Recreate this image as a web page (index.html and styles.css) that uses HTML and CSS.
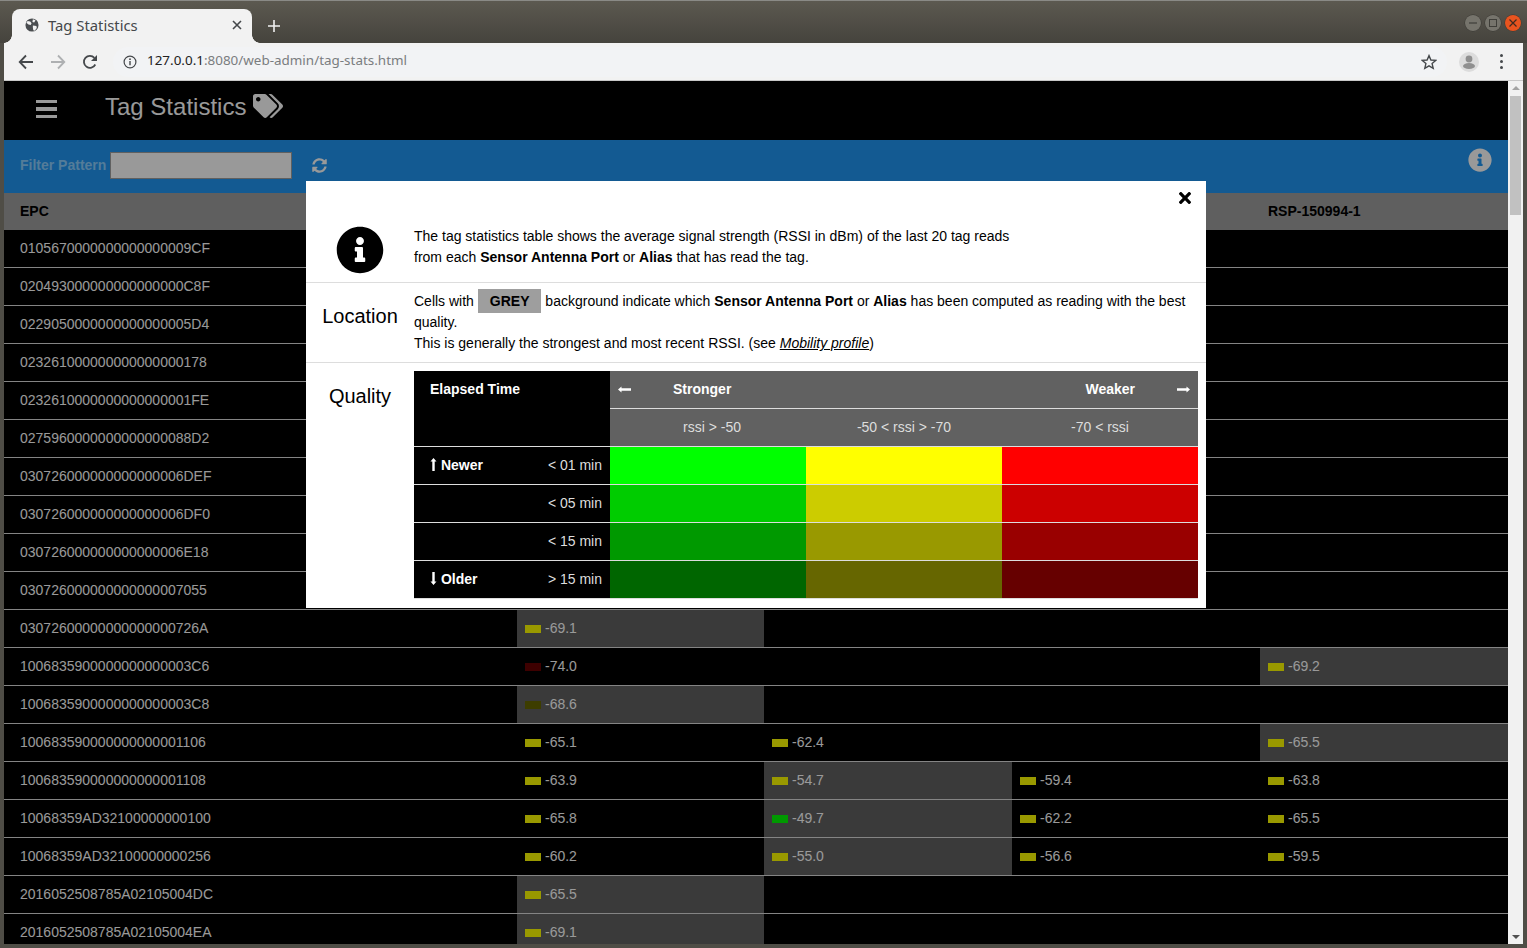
FILE: index.html
```html
<!DOCTYPE html>
<html lang="en">
<head>
<meta charset="UTF-8" />
<title>Tag Statistics</title>
<link rel="stylesheet" href="styles.css">
</head>
<body>

<div class="titlebar">
  <div class="tab">
    <svg class="tab-globe" viewBox="0 0 16 16"><circle cx="8" cy="8" r="7.5" fill="#4a4d50"/><path d="M3 3.5l3 .5 1.5 2-1 2-2.500-.5L1.500 5.500zM9 1.500l3 1-1.500 2.500-2-.5zM9 8.500l4 .5.500 2.500-2.500 3-1.500-.5-.5-3z" fill="#f2f2f2"/></svg>
    <span class="tab-title">Tag Statistics</span>
    <svg class="tab-close" viewBox="0 0 10 10"><path d="M1 1l8 8M9 1l-8 8" stroke="#45484b" stroke-width="1.600"/></svg>
  </div>
  <svg class="new-tab" viewBox="0 0 12 12"><path d="M6 0v12M0 6h12" stroke="#f1f1f1" stroke-width="1.600"/></svg>
  <div class="win-buttons">
    <span class="win-btn"><svg viewBox="0 0 16 16"><path d="M4 8h8" stroke="#3f3e39" stroke-width="1.200"/></svg></span>
    <span class="win-btn"><svg viewBox="0 0 16 16"><rect x="4.500" y="4.500" width="7" height="7" fill="none" stroke="#3f3e39"/></svg></span>
    <span class="win-btn win-close"><svg viewBox="0 0 16 16"><path d="M4.500 4.500l7 7M11.500 4.500l-7 7" stroke="#3f2a20" stroke-width="1.200"/></svg></span>
  </div>
</div>

<div class="toolbar">
  <svg class="nav-icon" viewBox="0 0 16 16"><path d="M15 8H2M8 1.500L1.700 8 8 14.500" fill="none" stroke="#45484b" stroke-width="1.800"/></svg>
  <svg class="nav-icon" viewBox="0 0 16 16"><path d="M1 8h13M8 1.500L14.300 8 8 14.500" fill="none" stroke="#aeb0b2" stroke-width="1.800"/></svg>
  <svg class="nav-icon" viewBox="0 0 16 16"><path d="M13.300 10.500A6 6 0 1 1 12.400 3.800" fill="none" stroke="#45484b" stroke-width="1.800"/><path d="M15 1v6H9z" fill="#45484b"/></svg>
  <div class="omnibox">
    <svg class="omni-info" viewBox="0 0 14 14"><circle cx="7" cy="7" r="5.900" fill="none" stroke="#45484b" stroke-width="1.200"/><path d="M7 6v4.300" stroke="#45484b" stroke-width="1.400"/><circle cx="7" cy="4.200" r=".9" fill="#45484b"/></svg>
    <span class="url"><span class="url-host">127.0.0.1</span>:8080/web-admin/tag-stats.html</span>
    <svg class="star" viewBox="0 0 16 16"><path d="M8 1.600l1.900 4.400 4.800.4-3.600 3.200 1.100 4.700L8 11.800l-4.200 2.500 1.100-4.700-3.600-3.200 4.800-.4z" fill="none" stroke="#45484b" stroke-width="1.400"/></svg>
  </div>
  <svg class="avatar" viewBox="0 0 20 20"><circle cx="10" cy="10" r="10" fill="#dcdcdc"/><circle cx="10" cy="7" r="3.400" fill="#8f8f8f"/><ellipse cx="10" cy="14" rx="6" ry="3" fill="#8f8f8f"/></svg>
  <div class="menu-dots"><i></i><i></i><i></i></div>
</div>

<div class="window">
  <div class="page">
    <div class="page-head">
      <div class="hamburger"><i></i><i></i><i></i></div>
      <h1>Tag Statistics</h1>
      <svg class="tags-icon" viewBox="0 0 640 512"><path d="M497.941 225.941L286.059 14.059A48 48 0 0 0 252.118 0H48C21.49 0 0 21.49 0 48v204.118a48 48 0 0 0 14.059 33.941l211.882 211.882c18.744 18.745 49.136 18.746 67.882 0l204.118-204.118c18.745-18.745 18.745-49.137 0-67.882zM112 160c-26.51 0-48-21.49-48-48s21.49-48 48-48 48 21.49 48 48-21.49 48-48 48zm513.941 133.823L421.823 497.941c-18.745 18.745-49.137 18.745-67.882 0l-.36-.36L527.64 323.522c16.999-16.999 26.36-39.6 26.36-63.64s-9.362-46.641-26.36-63.64L331.397 0h48.721a48 48 0 0 1 33.941 14.059l211.882 211.882c18.745 18.745 18.745 49.137 0 67.882z"/></svg>
    </div>

    <div class="filter-bar">
      <label for="filter">Filter Pattern</label>
      <input type="text" id="filter" />
      <svg class="sync-icon" viewBox="0 0 512 512"><path d="M370.72 133.28C339.458 104.008 298.888 87.962 255.848 88c-77.458.068-144.328 53.178-162.791 126.85-1.344 5.363-6.122 9.15-11.651 9.15H24.103c-7.498 0-13.194-6.807-11.807-14.176C33.933 94.924 134.813 8 256 8c66.448 0 126.791 26.136 171.315 68.685L463.03 40.97C478.149 25.851 504 36.559 504 57.941V192c0 13.255-10.745 24-24 24H345.941c-21.382 0-32.09-25.851-16.971-40.971l41.75-41.749zM32 296h134.059c21.382 0 32.09 25.851 16.971 40.971l-41.75 41.75c31.262 29.273 71.835 45.319 114.876 45.28 77.418-.07 144.315-53.144 162.787-126.849 1.344-5.363 6.122-9.15 11.651-9.15h57.304c7.498 0 13.194 6.807 11.807 14.176C478.067 417.076 377.187 504 256 504c-66.448 0-126.791-26.136-171.315-68.685L48.97 471.03C33.851 486.149 8 475.441 8 454.059V320c0-13.255 10.745-24 24-24z"/></svg>
      <svg class="help-icon" viewBox="0 0 512 512"><path d="M256 8C119.043 8 8 119.083 8 256c0 136.997 111.043 248 248 248s248-111.003 248-248C504 119.083 392.957 8 256 8zm0 110c23.196 0 42 18.804 42 42s-18.804 42-42 42-42-18.804-42-42 18.804-42 42-42zm56 254c0 6.627-5.373 12-12 12h-88c-6.627 0-12-5.373-12-12v-24c0-6.627 5.373-12 12-12h12v-64h-12c-6.627 0-12-5.373-12-12v-24c0-6.627 5.373-12 12-12h64c6.627 0 12 5.373 12 12v100h12c6.627 0 12 5.373 12 12v24z"/></svg>
    </div>

    <table class="stats">
      <colgroup><col class="col-epc"><col class="col-a"><col class="col-b"><col class="col-b"><col class="col-b"></colgroup>
      <thead><tr><th>EPC</th><th></th><th></th><th></th><th>RSP-150994-1</th></tr></thead>
      <tbody>
        <tr><td>0105670000000000000009CF</td><td></td><td></td><td></td><td></td></tr>
        <tr><td>020493000000000000000C8F</td><td></td><td></td><td></td><td></td></tr>
        <tr><td>0229050000000000000005D4</td><td></td><td></td><td></td><td></td></tr>
        <tr><td>023261000000000000000178</td><td></td><td></td><td></td><td></td></tr>
        <tr><td>0232610000000000000001FE</td><td></td><td></td><td></td><td></td></tr>
        <tr><td>0275960000000000000088D2</td><td></td><td></td><td></td><td></td></tr>
        <tr><td>030726000000000000006DEF</td><td></td><td></td><td></td><td></td></tr>
        <tr><td>030726000000000000006DF0</td><td></td><td></td><td></td><td></td></tr>
        <tr><td>030726000000000000006E18</td><td></td><td></td><td></td><td></td></tr>
        <tr><td>030726000000000000007055</td><td></td><td></td><td></td><td></td></tr>
        <tr><td>03072600000000000000726A</td><td class="best"><i class="bar y1"></i>-69.1</td><td></td><td></td><td></td></tr>
        <tr><td>1006835900000000000003C6</td><td><i class="bar r4"></i>-74.0</td><td></td><td></td><td class="best"><i class="bar y1"></i>-69.2</td></tr>
        <tr><td>1006835900000000000003C8</td><td class="best"><i class="bar y4"></i>-68.6</td><td></td><td></td><td></td></tr>
        <tr><td>100683590000000000001106</td><td><i class="bar y1"></i>-65.1</td><td><i class="bar y1"></i>-62.4</td><td></td><td class="best"><i class="bar y1"></i>-65.5</td></tr>
        <tr><td>100683590000000000001108</td><td><i class="bar y1"></i>-63.9</td><td class="best"><i class="bar y1"></i>-54.7</td><td><i class="bar y1"></i>-59.4</td><td><i class="bar y1"></i>-63.8</td></tr>
        <tr><td>10068359AD32100000000100</td><td><i class="bar y1"></i>-65.8</td><td class="best"><i class="bar g1"></i>-49.7</td><td><i class="bar y1"></i>-62.2</td><td><i class="bar y1"></i>-65.5</td></tr>
        <tr><td>10068359AD32100000000256</td><td><i class="bar y1"></i>-60.2</td><td class="best"><i class="bar y1"></i>-55.0</td><td><i class="bar y1"></i>-56.6</td><td><i class="bar y1"></i>-59.5</td></tr>
        <tr><td>2016052508785A02105004DC</td><td class="best"><i class="bar y1"></i>-65.5</td><td></td><td></td><td></td></tr>
        <tr><td>2016052508785A02105004EA</td><td class="best"><i class="bar y1"></i>-69.1</td><td></td><td></td><td></td></tr>
      </tbody>
    </table>

    <div class="modal">
      <div class="modal-box">
        <div class="modal-top">
          <svg class="close-icon" viewBox="0 80 352 352"><path d="M242.72 256l100.07-100.07c12.28-12.28 12.28-32.19 0-44.48l-22.24-22.24c-12.28-12.28-32.19-12.28-44.48 0L176 189.28 75.93 89.21c-12.28-12.28-32.19-12.28-44.48 0L9.21 111.45c-12.28 12.28-12.28 32.19 0 44.48L109.28 256 9.21 356.07c-12.28 12.28-12.28 32.19 0 44.48l22.24 22.24c12.28 12.28 32.2 12.28 44.48 0L176 322.72l100.07 100.07c12.28 12.28 32.2 12.28 44.48 0l22.24-22.24c12.28-12.28 12.28-32.19 0-44.48L242.72 256z"/></svg>
        </div>
        <div class="help-row help-intro">
          <div class="help-label"><svg class="big-info" viewBox="0 0 512 512"><path d="M256 8C119.043 8 8 119.083 8 256c0 136.997 111.043 248 248 248s248-111.003 248-248C504 119.083 392.957 8 256 8zm0 110c23.196 0 42 18.804 42 42s-18.804 42-42 42-42-18.804-42-42 18.804-42 42-42zm56 254c0 6.627-5.373 12-12 12h-88c-6.627 0-12-5.373-12-12v-24c0-6.627 5.373-12 12-12h12v-64h-12c-6.627 0-12-5.373-12-12v-24c0-6.627 5.373-12 12-12h64c6.627 0 12 5.373 12 12v100h12c6.627 0 12 5.373 12 12v24z"/></svg></div>
          <div class="help-text">The tag statistics table shows the average signal strength (RSSI in dBm) of the last 20 tag reads<br>from each <b>Sensor Antenna Port</b> or <b>Alias</b> that has read the tag.</div>
        </div>
        <div class="help-row help-location">
          <div class="help-label">Location</div>
          <div class="help-text">Cells with <span class="grey-tag">GREY</span> background indicate which <b>Sensor Antenna Port</b> or <b>Alias</b> has been computed as reading with the best quality.<br>This is generally the strongest and most recent RSSI. (see <a href="#"><i>Mobility profile</i></a>)</div>
        </div>
        <div class="help-row help-quality">
          <div class="help-label">Quality</div>
          <table class="legend">
            <tr>
              <th class="corner" rowspan="2">Elapsed Time</th>
              <th class="dir" colspan="3">
                <div class="dir-row">
                  <svg class="arrow-h" viewBox="0 0 13 7"><path d="M13 2.300H3.500V.5L0 3.500l3.500 3V4.700H13z"/></svg>
                  <span class="dir-left">Stronger</span>
                  <span class="dir-right">Weaker</span>
                  <svg class="arrow-h" viewBox="0 0 13 7"><path d="M0 2.300h9.500V.5L13 3.500l-3.500 3V4.700H0z"/></svg>
                </div>
              </th>
            </tr>
            <tr><td class="range range-first">rssi &gt; -50</td><td class="range">-50 &lt; rssi &gt; -70</td><td class="range">-70 &lt; rssi</td></tr>
            <tr>
              <th class="age"><div class="age-row"><b><svg class="arrow-v" viewBox="0 0 7 13"><path d="M2.300 13V3.500H.5L3.500 0l3 3.500H4.700V13z"/></svg> Newer</b><span>&lt; 01 min</span></div></th>
              <td class="c-g1"></td><td class="c-y1"></td><td class="c-r1"></td>
            </tr>
            <tr>
              <th class="age"><div class="age-row"><b></b><span>&lt; 05 min</span></div></th>
              <td class="c-g2"></td><td class="c-y2"></td><td class="c-r2"></td>
            </tr>
            <tr>
              <th class="age"><div class="age-row"><b></b><span>&lt; 15 min</span></div></th>
              <td class="c-g3"></td><td class="c-y3"></td><td class="c-r3"></td>
            </tr>
            <tr>
              <th class="age"><div class="age-row"><b><svg class="arrow-v" viewBox="0 0 7 13"><path d="M2.300 0v9.500H.5L3.500 13l3-3.500H4.700V0z"/></svg> Older</b><span>&gt; 15 min</span></div></th>
              <td class="c-g4"></td><td class="c-y4"></td><td class="c-r4"></td>
            </tr>
          </table>
        </div>
      </div>
    </div>
  </div>

  <div class="scrollbar">
    <span class="sb-up"></span>
    <div class="sb-track"><div class="sb-thumb"></div></div>
    <span class="sb-down"></span>
  </div>
</div>

</body>
</html>
```

FILE: styles.css
```css
html, body { height: 100%; }
body { margin: 0; height: 948px; overflow: hidden; background: #4f4d46; display: flex; flex-direction: column; font-family: "Liberation Sans", Arial, sans-serif; font-size: 14px; color: #000; }

/* browser chrome */
.titlebar { height: 43px; flex: none; display: flex; align-items: flex-end; padding-left: 12px; background: linear-gradient(#5c5950, #45433d); border-top: 1px solid #8a8a86; box-sizing: border-box; }
.tab { position: relative; width: 240px; height: 34px; box-sizing: border-box; display: flex; align-items: center; padding: 0 10px 2px 13px; background: #f2f2f2; border-radius: 8px 8px 0 0; }
.tab::before, .tab::after { content: ""; position: absolute; bottom: 0; width: 8px; height: 8px; }
.tab::before { left: -8px; background: radial-gradient(circle at 0 0, transparent 7.5px, #f2f2f2 8px); }
.tab::after { right: -8px; background: radial-gradient(circle at 100% 0, transparent 7.5px, #f2f2f2 8px); }
.tab-globe { width: 14px; height: 14px; }
.tab-title { margin-left: 9px; flex: 1; font-family: "Noto Sans", sans-serif; font-size: 14.800px; color: #45484b; }
.tab-close { width: 10px; height: 10px; }
.new-tab { width: 12px; height: 12px; margin: 0 0 11px 16px; }
.win-buttons { margin-left: auto; margin-right: 6px; margin-bottom: 12px; display: flex; gap: 4px; }
.win-btn { width: 16px; height: 16px; border-radius: 50%; background: #76746c; box-shadow: 0 0 0 .5px #3a3934; display: block; }
.win-btn svg { display: block; }
.win-close { background: #e9541f; }

.toolbar { height: 38px; flex: none; margin: 0 4px; box-sizing: border-box; padding: 0 0 0 14px; display: flex; align-items: center; background: #f2f2f2; border-bottom: 1px solid #c8c8c8; }
.nav-icon { width: 16px; height: 16px; margin-right: 16px; }
.omnibox { width: 1334px; height: 30px; margin-left: -1px; display: flex; align-items: center; background: #f2f3f5; border-radius: 15px; padding-left: 10px; box-sizing: border-box; }
.omni-info { width: 14px; height: 14px; }
.url { margin: 0 0 4px 10px; flex: 1; font-family: "Noto Sans", sans-serif; font-size: 13.450px; color: #7a7d80; }
.url-host { color: #222; }
.star { width: 16px; height: 16px; margin-right: 10px; }
.avatar { width: 20px; height: 20px; margin-left: 12px; }
.menu-dots { margin-left: 21px; display: flex; flex-direction: column; gap: 3px; }
.menu-dots i { display: block; width: 3px; height: 3px; background: #45484b; border-radius: 50%; }

.window { flex: none; height: 863px; margin: 0 4px; display: flex; background: #000; }

/* page */
.page { position: relative; width: 1504px; height: 863px; overflow: hidden; background: #000; color: #fff; }
.page-head { height: 59px; padding-bottom: 8px; box-sizing: border-box; display: flex; align-items: center; }
.hamburger { margin-left: 32px; width: 21px; display: flex; flex-direction: column; gap: 4px; margin-top: 5px; }
.hamburger i { display: block; height: 3.500px; background: #fff; }
.page-head h1 { margin: 0 0 0 48px; font-size: 24px; font-weight: normal; }
.tags-icon { width: 30px; height: 24px; margin: -2px 0 0 7px; fill: #fff; }

.filter-bar { position: relative; height: 53px; display: flex; align-items: center; padding-left: 16px; background: #2196f3; }
.filter-bar label { font-weight: bold; color: #8ccfff; margin-bottom: 3px; }
.filter-bar input { width: 182px; height: 27px; box-sizing: border-box; margin: 0 0 2px 4px; padding: 0; background: #fff; border: 1px solid #a0a0a0; }
.sync-icon { width: 15px; height: 15px; margin: 0 0 2px 20px; fill: #fff; }
.help-icon { position: absolute; right: 16px; top: 8px; width: 24px; height: 24px; fill: #fff; }

.stats { width: 1504px; table-layout: fixed; border-collapse: separate; border-spacing: 0; }
.col-epc { width: 513px; }
.col-a { width: 247px; }
.col-b { width: 248px; }
.stats th { height: 37px; padding: 0 8px 2px; text-align: left; background: #9e9e9e; color: #000; box-sizing: border-box; font-weight: bold; }
.stats th:first-child, .stats td:first-child { padding-left: 16px; }
.stats td { height: 38px; padding: 0 8px 2px; box-sizing: border-box; border-bottom: 1px solid #ddd; color: #fff; white-space: nowrap; }
.stats td.best { background: #616161; }
.bar { display: inline-block; width: 16px; height: 8px; margin-right: 4px; }
.y1 { background: #ff0; }
.y4 { background: #660; }
.r4 { background: #600; }
.g1 { background: #0f0; }

/* help dialog */
.modal { position: absolute; left: 0; top: 0; width: 100%; height: 100%; background: rgba(0, 0, 0, .4); }
.modal-box { position: absolute; left: 302px; top: 100px; width: 900px; height: 427px; background: #fff; color: #000; font-size: 14px; line-height: 21px; }
.modal-top { height: 34px; display: flex; justify-content: flex-end; align-items: flex-start; padding: 11px 15px 0 0; box-sizing: border-box; }
.close-icon { width: 12px; height: 12px; }
.help-row { display: flex; border-bottom: 1px solid #ddd; }
.help-label { width: 108px; flex: none; text-align: center; font-size: 20px; line-height: 28px; }
.help-text { flex: 1; padding-right: 18px; }
.help-intro { height: 68px; align-items: flex-end; padding-bottom: 8px; box-sizing: border-box; }
.help-intro .help-text { padding-bottom: 6px; }
.big-info { width: 48px; height: 48px; display: block; margin: 0 auto; }
.help-location { height: 80px; box-sizing: border-box; padding-top: 8px; }
.help-location .help-label { padding-top: 11px; }
.grey-tag { padding: 4px 12px; background: #9e9e9e; font-weight: bold; }
.help-text a { color: #000; }
.help-quality { border-bottom: 0; padding-top: 8px; }
.help-quality .help-label { padding-top: 11px; }

.legend { width: 784px; table-layout: fixed; border-collapse: separate; border-spacing: 0; color: #fff; }
.legend th, .legend td { height: 38px; padding: 0; box-sizing: border-box; border-bottom: 1px solid #ddd; font-size: 14px; }
.legend th { background: #000; text-align: left; font-weight: normal; }
.legend .corner { width: 196px; padding: 8px 16px 0; vertical-align: top; font-weight: bold; }
.legend .dir, .legend .range { background: #616161; }
.legend .range { text-align: center; color: #ddd; }
.legend .range-first { padding-left: 8px; }
.dir-row { display: flex; align-items: center; padding: 0 8px; font-weight: bold; }
.arrow-h { width: 13px; height: 7px; fill: #fff; }
.dir-left { margin-left: 42px; }
.dir-right { margin-left: auto; margin-right: 42px; }
.arrow-v { width: 7px; height: 13px; fill: #fff; vertical-align: -1px; }
.age-row { display: flex; justify-content: space-between; padding: 0 8px 0 16px; }
.age-row b { font-weight: bold; }
.age-row span { color: #ddd; }
.c-g1 { background: #0f0; } .c-y1 { background: #ff0; } .c-r1 { background: #f00; }
.c-g2 { background: #0c0; } .c-y2 { background: #cc0; } .c-r2 { background: #c00; }
.c-g3 { background: #090; } .c-y3 { background: #990; } .c-r3 { background: #900; }
.c-g4 { background: #060; } .c-y4 { background: #660; } .c-r4 { background: #600; }

/* scrollbar */
.scrollbar { width: 15px; flex: none; background: #f1f1f1; display: flex; flex-direction: column; align-items: center; }
.sb-up { margin-top: 5px; border: 4px solid transparent; border-top: 0; border-bottom-color: #a3a3a3; }
.sb-track { flex: 1; width: 100%; margin-top: 6px; }
.sb-thumb { width: 11px; height: 119px; margin: 0 auto; background: #c1c1c1; }
.sb-down { margin-bottom: 5px; border: 4px solid transparent; border-bottom: 0; border-top-color: #505050; }
```
